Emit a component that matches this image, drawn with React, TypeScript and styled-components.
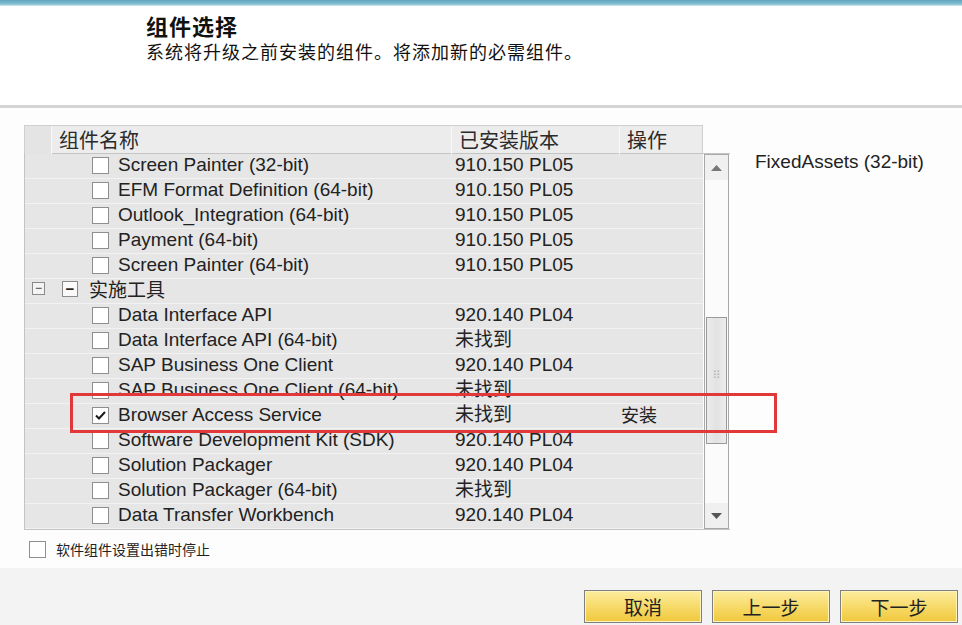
import React from "react";
import styled, { createGlobalStyle } from "styled-components";

type Row =
    | { kind: "item"; name: string; version: string; action?: string; checked?: boolean }
    | { kind: "group"; name: string };

const rows: Row[] = [
    { kind: "item", name: "Screen Painter (32-bit)", version: "910.150 PL05" },
    { kind: "item", name: "EFM Format Definition (64-bit)", version: "910.150 PL05" },
    { kind: "item", name: "Outlook_Integration (64-bit)", version: "910.150 PL05" },
    { kind: "item", name: "Payment (64-bit)", version: "910.150 PL05" },
    { kind: "item", name: "Screen Painter (64-bit)", version: "910.150 PL05" },
    { kind: "group", name: "实施工具" },
    { kind: "item", name: "Data Interface API", version: "920.140 PL04" },
    { kind: "item", name: "Data Interface API (64-bit)", version: "未找到" },
    { kind: "item", name: "SAP Business One Client", version: "920.140 PL04" },
    { kind: "item", name: "SAP Business One Client (64-bit)", version: "未找到" },
    { kind: "item", name: "Browser Access Service", version: "未找到", action: "安装", checked: true },
    { kind: "item", name: "Software Development Kit (SDK)", version: "920.140 PL04" },
    { kind: "item", name: "Solution Packager", version: "920.140 PL04" },
    { kind: "item", name: "Solution Packager (64-bit)", version: "未找到" },
    { kind: "item", name: "Data Transfer Workbench", version: "920.140 PL04" },
];

const GlobalStyle = createGlobalStyle`
    body {
        margin: 0;
        background: #fafafa;
        font-family: "Liberation Sans", "Noto Sans CJK SC", sans-serif;
        color: #1a1a1a;
    }
`;

export default function App() {
    return (
        <>
            <GlobalStyle />
            <Page>
                <TopStrip />
                <Header>
                    <Title>组件选择</Title>
                    <Subtitle>系统将升级之前安装的组件。将添加新的必需组件。</Subtitle>
                </Header>
                <Body>
                    <Main>
                        <TableBox>
                            <HeaderRow>
                                <HeadCell />
                                <HeadCell>组件名称</HeadCell>
                                <HeadCell>已安装版本</HeadCell>
                                <HeadCell>操作</HeadCell>
                            </HeaderRow>
                            <ListArea>
                                <List>
                                    {rows.map((row, i) =>
                                        row.kind === "group" ? (
                                            <GroupRow key={i}>
                                                <TreeToggle>−</TreeToggle>
                                                <GroupBox>−</GroupBox>
                                                <GroupName>{row.name}</GroupName>
                                            </GroupRow>
                                        ) : (
                                            <ItemRow key={i}>
                                                <NameCell>
                                                    <CheckBox>
                                                        {row.checked && (
                                                            <svg width="13" height="13" viewBox="0 0 13 13">
                                                                <path
                                                                    d="M2 6.5 L5 9.5 L11 3"
                                                                    fill="none"
                                                                    stroke="#1a1a1a"
                                                                    strokeWidth="2"
                                                                />
                                                            </svg>
                                                        )}
                                                    </CheckBox>
                                                    <span>{row.name}</span>
                                                </NameCell>
                                                <VersionCell>{row.version}</VersionCell>
                                                <ActionCell>{row.action ?? ""}</ActionCell>
                                            </ItemRow>
                                        )
                                    )}
                                </List>
                                <ScrollBar>
                                    <ScrollButton>
                                        <svg width="11" height="6" viewBox="0 0 11 6">
                                            <path d="M0 6 L5.5 0 L11 6 Z" fill="#777" />
                                        </svg>
                                    </ScrollButton>
                                    <ScrollTrack>
                                        <Thumb>
                                            <Grip>⠿</Grip>
                                        </Thumb>
                                    </ScrollTrack>
                                    <ScrollButton>
                                        <svg width="11" height="6" viewBox="0 0 11 6">
                                            <path d="M0 0 L11 0 L5.5 6 Z" fill="#555" />
                                        </svg>
                                    </ScrollButton>
                                </ScrollBar>
                            </ListArea>
                            <Highlight />
                        </TableBox>
                        <SideText>FixedAssets (32-bit)</SideText>
                    </Main>
                    <StopOption>
                        <SmallBox />
                        <span>软件组件设置出错时停止</span>
                    </StopOption>
                </Body>
                <Footer>
                    <WizardButton>取消</WizardButton>
                    <WizardButton>上一步</WizardButton>
                    <WizardButton>下一步</WizardButton>
                </Footer>
            </Page>
        </>
    );
}

const Page = styled.div`
    width: 962px;
    height: 625px;
    display: flex;
    flex-direction: column;
    overflow: hidden;
`;

const TopStrip = styled.div`
    height: 6px;
    background: linear-gradient(to bottom, #5fa5bd 0%, #86c0d2 70%, #dcecf2 100%);
`;

const Header = styled.div`
    height: 94px;
    background: #ffffff;
    padding: 5px 0 0 146px;
    border-bottom: 3px solid #d4d4d4;
    box-shadow: 0 2px 2px #ececec;
`;

const Title = styled.div`
    font-family: "Noto Sans CJK SC", sans-serif;
    font-weight: 700;
    font-size: 22px;
    line-height: 28px;
    letter-spacing: 1px;
    color: #111;
`;

const Subtitle = styled.div`
    font-family: "Noto Sans CJK SC", sans-serif;
    font-size: 18px;
    line-height: 24px;
    letter-spacing: 1px;
    color: #111;
`;

const Body = styled.div`
    flex: 1;
    background: #fdfdfd;
    padding: 17px 0 0 24px;
    display: flex;
    flex-direction: column;
`;

const Main = styled.div`
    display: flex;
    align-items: flex-start;
    gap: 25px;
`;

const TableBox = styled.div`
    position: relative;
    width: 706px;
`;

const HeaderRow = styled.div`
    display: grid;
    grid-template-columns: 26px 400px 168px 85px;
    width: 679px;
    height: 28px;
    background: #ececec;
    border: 1px solid #cfcfcf;
    border-bottom: none;
    box-sizing: border-box;
`;

const HeadCell = styled.div`
    font-family: "Noto Sans CJK SC", sans-serif;
    font-size: 20px;
    line-height: 28px;
    color: #2a2a2a;
    padding-left: 7px;
    border-left: 1px solid #f8f8f8;
    &:first-child {
        border-left: none;
        background: #e4e4e4;
    }
`;

const ListArea = styled.div`
    display: flex;
    border: 1px solid #c4c4c4;
    border-right: none;
`;

const List = styled.div`
    width: 678px;
    display: flex;
    flex-direction: column;
    background: #e6e6e6;
`;

const RowBase = styled.div`
    height: 25px;
    box-sizing: border-box;
    border-bottom: 1px solid #f2f2f2;
    display: flex;
    align-items: center;
    font-size: 19px;
    line-height: 22px;
    color: #222;
`;

const ItemRow = styled(RowBase)`
    display: grid;
    grid-template-columns: 426px 167px 85px;
    padding-bottom: 2px;
`;

const NameCell = styled.div`
    display: flex;
    align-items: center;
    gap: 9px;
    padding-left: 67px;
    white-space: nowrap;
`;

const CheckBox = styled.div`
    width: 17px;
    height: 17px;
    box-sizing: border-box;
    border: 1px solid #8e8e8e;
    background: #ffffff;
    display: flex;
    align-items: center;
    justify-content: center;
`;

const VersionCell = styled.div`
    padding-left: 4px;
    white-space: nowrap;
`;

const ActionCell = styled.div`
    padding: 0 0 3px 3px;
    font-family: "Noto Sans CJK SC", sans-serif;
    font-size: 18px;
    line-height: 18px;
`;

const GroupRow = styled(RowBase)`
    padding: 0 0 5px 7px;
`;

const TreeToggle = styled.div`
    width: 13px;
    height: 13px;
    box-sizing: border-box;
    border: 1px solid #8a8a8a;
    background: #f4f4f4;
    font-size: 12px;
    line-height: 10px;
    text-align: center;
    color: #333;
`;

const GroupBox = styled.div`
    width: 16px;
    height: 16px;
    margin-left: 17px;
    box-sizing: border-box;
    border: 1px solid #8a8a8a;
    background: #fafafa;
    font-size: 15px;
    font-weight: 700;
    line-height: 13px;
    text-align: center;
    color: #222;
`;

const GroupName = styled.span`
    margin-left: 11px;
    font-family: "Noto Sans CJK SC", sans-serif;
    font-size: 19px;
`;

const ScrollBar = styled.div`
    width: 25px;
    margin-left: 1px;
    display: flex;
    flex-direction: column;
    background: #ffffff;
    border: 1px solid #a8a8a8;
    box-sizing: border-box;
`;

const ScrollButton = styled.div`
    height: 25px;
    display: flex;
    align-items: center;
    justify-content: center;
    background: #f0f0f0;
`;

const ScrollTrack = styled.div`
    flex: 1;
    padding-top: 137px;
    background: #fbfbfb;
`;

const Thumb = styled.div`
    height: 127px;
    margin: 0 1px;
    border: 1px solid #9a9a9a;
    background: linear-gradient(to right, #ececec, #e2e2e2 50%, #ececec);
    display: flex;
    justify-content: center;
    padding-top: 52px;
    box-sizing: border-box;
`;

const Grip = styled.span`
    font-family: "DejaVu Sans", sans-serif;
    font-size: 11px;
    line-height: 11px;
    color: #b8b8b8;
`;

const Highlight = styled.div`
    position: absolute;
    left: 46px;
    top: 268px;
    width: 707px;
    height: 40px;
    box-sizing: border-box;
    border: 3px solid #e2383a;
`;

const SideText = styled.div`
    margin-top: 26px;
    font-size: 19px;
    color: #222;
`;

const StopOption = styled.div`
    display: flex;
    align-items: center;
    gap: 10px;
    margin: 9px 0 0 5px;
    font-family: "Noto Sans CJK SC", sans-serif;
    font-size: 14px;
    color: #222;
`;

const SmallBox = styled.div`
    width: 17px;
    height: 17px;
    box-sizing: border-box;
    border: 1px solid #8e8e8e;
    background: #ffffff;
`;

const Footer = styled.div`
    height: 57px;
    background: #f3f3f3;
    display: flex;
    justify-content: flex-end;
    align-items: flex-end;
    gap: 10px;
    padding: 0 4px 2px 0;
    box-sizing: border-box;
`;

const WizardButton = styled.div`
    width: 118px;
    height: 33px;
    box-sizing: border-box;
    border: 1px solid #7f7f7f;
    box-shadow: inset 0 0 0 1px #fff4c0;
    background: linear-gradient(to bottom, #fcec9e 0%, #f7da6a 50%, #f0c83c 100%);
    display: flex;
    align-items: center;
    justify-content: center;
    font-family: "Noto Sans CJK SC", sans-serif;
    font-size: 19px;
    color: #222;
`;
